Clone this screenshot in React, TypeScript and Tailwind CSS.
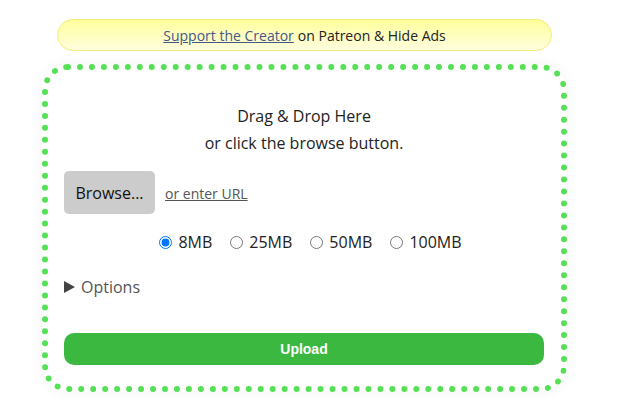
import { useState } from "react";

const SIZES = ["8MB", "25MB", "50MB", "100MB"];

export default function App() {
  const [size, setSize] = useState("8MB");

  return (
    <div className="min-h-[403px] w-[618px] bg-white font-['Open_Sans','Noto_Sans',sans-serif] text-[#222]">
      <div className="ml-[42px] w-[525px] pt-[19px]">
        {/* PATREON BANNER */}
        <div className="mx-[15px] flex h-[32px] items-center justify-center rounded-full border border-[#f3ec7a] bg-gradient-to-b from-[#ffff9c] to-[#fffddc] text-[14px]">
          <a href="#" className="text-[#44598a] underline">
            Support the Creator
          </a>
          <span className="ml-[4px]">on Patreon &amp; Hide Ads</span>
        </div>

        {/* DROP ZONE */}
        <div className="mt-[13px] rounded-[26px] border-[6px] border-dotted border-[#55e055] bg-white pt-[33px] pr-[17px] pb-[21px] pl-[16px] shadow-[0_0_12px_rgba(60,120,60,0.08)]">
          <div className="text-center text-[16px] leading-[27px]">
            <div>Drag &amp; Drop Here</div>
            <div>or click the browse button.</div>
          </div>

          <div className="mt-[14px] flex items-center gap-[10px]">
            <button className="h-[43px] w-[91px] rounded-[5px] bg-[#cccccc] text-[16px] text-[#111]">
              Browse...
            </button>
            <a href="#" className="mt-[2px] text-[14px] text-[#555] underline">
              or enter URL
            </a>
          </div>

          <div className="mt-[16px] flex h-[24px] items-center justify-center gap-[18px] pl-[13px] text-[16px]">
            {SIZES.map((s) => (
              <label key={s} className="flex items-center gap-[6px]">
                <input
                  type="radio"
                  name="size"
                  checked={size === s}
                  onChange={() => setSize(s)}
                  className="m-0 h-[13px] w-[13px]"
                />
                <span>{s}</span>
              </label>
            ))}
          </div>

          <div className="mt-[21px] flex h-[24px] items-center gap-[6px] text-[16px] text-[#555]">
            <svg width="11" height="12" viewBox="0 0 11 12">
              <polygon points="0,0 11,6 0,12" fill="#444" />
            </svg>
            <span>Options</span>
          </div>

          <button className="mt-[34px] h-[32px] w-full rounded-[10px] bg-[#3ab83f] font-['Liberation_Sans',Arial,sans-serif] text-[14px] font-bold text-white">
            Upload
          </button>
        </div>
      </div>
    </div>
  );
}
